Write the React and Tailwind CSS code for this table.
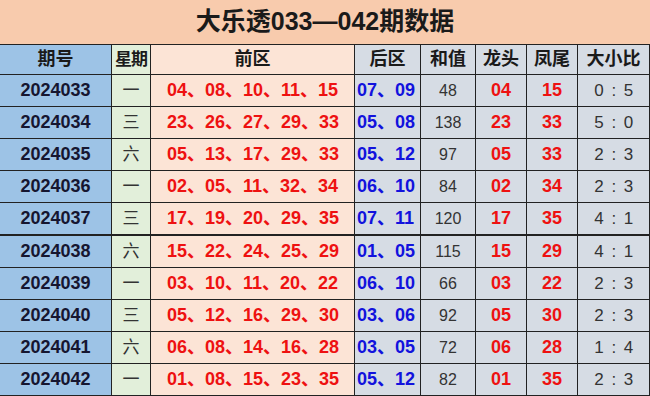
import React from "react";

const rows = [
  ["2024033", "一", "04、08、10、11、15", "07、09", "48", "04", "15", "0 : 5"],
  ["2024034", "三", "23、26、27、29、33", "05、08", "138", "23", "33", "5 : 0"],
  ["2024035", "六", "05、13、17、29、33", "05、12", "97", "05", "33", "2 : 3"],
  ["2024036", "一", "02、05、11、32、34", "06、10", "84", "02", "34", "2 : 3"],
  ["2024037", "三", "17、19、20、29、35", "07、11", "120", "17", "35", "4 : 1"],
  ["2024038", "六", "15、22、24、25、29", "01、05", "115", "15", "29", "4 : 1"],
  ["2024039", "一", "03、10、11、20、22", "06、10", "66", "03", "22", "2 : 3"],
  ["2024040", "三", "05、12、16、29、30", "03、06", "92", "05", "30", "2 : 3"],
  ["2024041", "六", "06、08、14、16、28", "03、05", "72", "06", "28", "1 : 4"],
  ["2024042", "一", "01、08、15、23、35", "05、12", "82", "01", "35", "2 : 3"],
];

const font = { fontFamily: '"Liberation Sans", "Noto Sans CJK SC", sans-serif' };

const headerBg = [
  "bg-[#9dc3e6]",
  "bg-[#e2efda]",
  "bg-[#fce4d6]",
  "bg-[#d6dce4]",
  "bg-[#d6dce4]",
  "bg-[#d6dce4]",
  "bg-[#d6dce4]",
  "bg-[#d6dce4]",
];

const cellText = [
  "font-bold text-[18px] text-[#161630]",
  "text-[17px] text-[#333]",
  "font-bold text-[18px] text-[#ee1111] justify-start pl-[16px]",
  "font-bold text-[18px] text-[#1212dd] justify-start pl-[2px]",
  "text-[16px] text-[#333]",
  "font-bold text-[18px] text-[#ee1111]",
  "font-bold text-[18px] text-[#ee1111]",
  "text-[17px] text-[#333] whitespace-pre tracking-[1.5px] pl-[2px]",
];

const headers = ["期号", "星期", "前区", "后区", "和值", "龙头", "凤尾", "大小比"];

export default function App() {
  return (
    <div className="w-[650px] h-[396px] bg-white overflow-hidden" style={font}>
      <div className="h-[45px] border-b border-[#222] bg-[#f8cbad] flex items-center justify-center text-[25px] font-bold text-[#1a1a1a]">
        大乐透033—042期数据
      </div>
      <div className="grid grid-cols-[112px_39px_204px_66px_55px_51px_51px_72px]">
        {headers.map((h, i) => (
          <div
            key={h}
            className={`h-[30px] border-b border-r border-[#222] flex items-center justify-center font-bold text-[#1a1a1a] ${headerBg[i]} ${i === 1 ? "text-[17px] tracking-[-1px]" : "text-[18px]"}`}
          >
            {h}
          </div>
        ))}
        {rows.map((r, ri) =>
          r.map((c, ci) => (
            <div
              key={ri + "-" + ci}
              className={`${ri === 4 ? "h-[33px] border-b-2" : "h-[32px] border-b"} border-r border-[#222] flex items-center justify-center ${headerBg[ci]} ${cellText[ci]}`}
            >
              {c}
            </div>
          ))
        )}
      </div>
    </div>
  );
}
